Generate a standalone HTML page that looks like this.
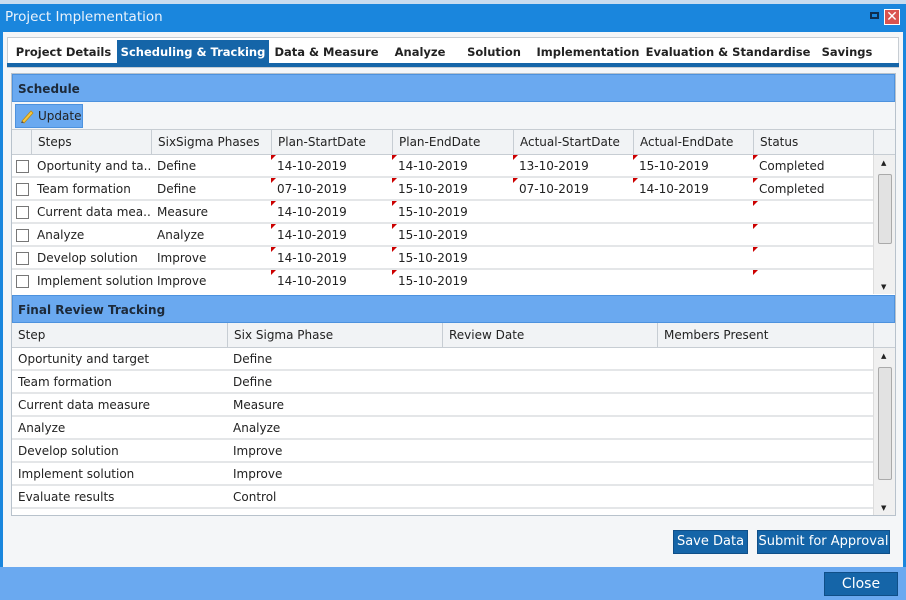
<!DOCTYPE html>
<html><head><style>
*{box-sizing:border-box;margin:0;padding:0}
body{width:906px;height:600px;overflow:hidden;background:#f4f6f8;font-family:"DejaVu Sans","Liberation Sans",sans-serif;font-size:12px;color:#222;position:relative}
.a{position:absolute}
.tab{position:absolute;top:40px;height:24px;line-height:25px;font-weight:bold;font-size:11.5px;color:#222;text-align:center}
.hdr{position:absolute;background:#6aa9f0;border:1px solid #4d92de;font-weight:bold;font-size:12px;color:#1d2a3a;padding-left:5px}
.gh{position:absolute;background:#f1f3f5;border-bottom:1px solid #c7cdd3;height:25px}
.gh div{position:absolute;top:0;height:25px;line-height:25px;padding-left:6px;border-left:1px solid #c7cdd3;font-size:12px}
.row{position:absolute;left:12px;height:23px;border-bottom:2px solid #e4e6e8;background:#fff}
.row div{position:absolute;top:0;line-height:23px;padding-left:6px;white-space:nowrap;overflow:hidden;font-size:12px}
.cb{position:absolute;left:4px;top:5px;width:13px;height:13px;border:1px solid #777;background:#fff}
.tri{position:absolute;top:0;width:0;height:0;border-top:5px solid #c00;border-right:5px solid transparent}
.btn{position:absolute;background:#1565a8;color:#fff;font-size:13px;text-align:center;border:1px solid #0f4f88}
.sb{position:absolute;background:#f0f0f0;border-left:1px solid #ddd}
.thumb{position:absolute;left:4px;width:14px;background:#e2e2e2;border:1px solid #aaa;border-radius:2px}
</style></head><body>
<div class="a" style="left:0;top:0;width:906px;height:4px;background:#c9dcef"></div>
<div class="a" style="left:0;top:4px;width:906px;height:28px;background:#1a86dd"></div>
<div class="a" style="left:5px;top:9px;color:#eaf2fb;font-size:13.5px">Project Implementation</div>
<div class="a" style="left:870px;top:12px;width:9px;height:7px;border:2px solid #0e2e50"></div>
<div class="a" style="left:884px;top:9px;width:16px;height:16px;background:#d9534f;border:1px solid #fff;color:#fff;font-weight:bold;font-size:14px;line-height:14px;text-align:center">✕</div>
<div class="a" style="left:0;top:32px;width:3px;height:535px;background:#1a86dd"></div>
<div class="a" style="left:903px;top:32px;width:3px;height:535px;background:#1a86dd"></div>

<div class="a" style="left:7px;top:37px;width:892px;height:31px;background:#fff;border:1px solid #c7cdd3"></div>
<div class="a" style="left:7px;top:63px;width:892px;height:4px;background:#1565a8"></div>
<div class="tab" style="left:10px;width:107px">Project Details</div>
<div class="tab" style="left:117px;width:152px;background:#1565a8;color:#fff;height:25px">Scheduling &amp; Tracking</div>
<div class="tab" style="left:269px;width:115px">Data &amp; Measure</div>
<div class="tab" style="left:384px;width:72px">Analyze</div>
<div class="tab" style="left:456px;width:76px">Solution</div>
<div class="tab" style="left:532px;width:112px">Implementation</div>
<div class="tab" style="left:644px;width:168px">Evaluation &amp; Standardise</div>
<div class="tab" style="left:812px;width:70px">Savings</div>

<div class="a" style="left:11px;top:73px;width:885px;height:443px;border:1px solid #b8c2cc;background:#fff"></div>
<div class="hdr" style="left:12px;top:74px;width:883px;height:28px;line-height:28px">Schedule</div>
<div class="a" style="left:12px;top:102px;width:883px;height:28px;background:#f4f6f8;border-bottom:1px solid #c7cdd3"></div>
<div class="a" style="left:15px;top:104px;width:68px;height:24px;background:#6aa9f0;border:1px solid #4d92de;line-height:22px;padding-left:22px;font-size:12px">Update</div>
<svg class="a" style="left:19px;top:108px" width="16" height="16"><path d="M3 13 L12 3 L14 5 L5 15 Z" fill="#f5c842" stroke="#c08a10" stroke-width="0.8"/><path d="M3 13 L2 15 L5 15Z" fill="#555"/></svg>

<div class="gh" style="left:12px;top:130px;width:883px">
<div style="left:19px">Steps</div><div style="left:139px">SixSigma Phases</div><div style="left:259px">Plan-StartDate</div><div style="left:380px">Plan-EndDate</div><div style="left:501px">Actual-StartDate</div><div style="left:621px">Actual-EndDate</div><div style="left:741px">Status</div><div style="left:861px"></div>
</div>

<div class="row" style="top:155px;width:861px"><span class="cb"></span><div style="left:19px;width:120px">Oportunity and ta...</div><div style="left:139px">Define</div><span class="tri" style="left:259px"></span><div style="left:259px">14-10-2019</div><span class="tri" style="left:380px"></span><div style="left:380px">14-10-2019</div><span class="tri" style="left:501px"></span><div style="left:501px">13-10-2019</div><span class="tri" style="left:621px"></span><div style="left:621px">15-10-2019</div><span class="tri" style="left:741px"></span><div style="left:741px">Completed</div></div>
<div class="row" style="top:178px;width:861px"><span class="cb"></span><div style="left:19px">Team formation</div><div style="left:139px">Define</div><span class="tri" style="left:259px"></span><div style="left:259px">07-10-2019</div><span class="tri" style="left:380px"></span><div style="left:380px">15-10-2019</div><span class="tri" style="left:501px"></span><div style="left:501px">07-10-2019</div><span class="tri" style="left:621px"></span><div style="left:621px">14-10-2019</div><span class="tri" style="left:741px"></span><div style="left:741px">Completed</div></div>
<div class="row" style="top:201px;width:861px"><span class="cb"></span><div style="left:19px;width:120px">Current data mea...</div><div style="left:139px">Measure</div><span class="tri" style="left:259px"></span><div style="left:259px">14-10-2019</div><span class="tri" style="left:380px"></span><div style="left:380px">15-10-2019</div><span class="tri" style="left:741px"></span></div>
<div class="row" style="top:224px;width:861px"><span class="cb"></span><div style="left:19px">Analyze</div><div style="left:139px">Analyze</div><span class="tri" style="left:259px"></span><div style="left:259px">14-10-2019</div><span class="tri" style="left:380px"></span><div style="left:380px">15-10-2019</div><span class="tri" style="left:741px"></span></div>
<div class="row" style="top:247px;width:861px"><span class="cb"></span><div style="left:19px">Develop solution</div><div style="left:139px">Improve</div><span class="tri" style="left:259px"></span><div style="left:259px">14-10-2019</div><span class="tri" style="left:380px"></span><div style="left:380px">15-10-2019</div><span class="tri" style="left:741px"></span></div>
<div class="row" style="top:270px;width:861px;height:24px;border:none"><span class="cb"></span><div style="left:19px">Implement solution</div><div style="left:139px">Improve</div><span class="tri" style="left:259px"></span><div style="left:259px">14-10-2019</div><span class="tri" style="left:380px"></span><div style="left:380px">15-10-2019</div><span class="tri" style="left:741px"></span></div>
<div class="sb" style="left:873px;top:155px;width:22px;height:139px"><div style="position:absolute;left:7px;top:4px;font-size:7px">▲</div><div class="thumb" style="top:19px;height:70px"></div><div style="position:absolute;left:7px;bottom:3px;font-size:7px">▼</div></div>

<div class="hdr" style="left:12px;top:295px;width:883px;height:28px;line-height:28px">Final Review Tracking</div>
<div class="gh" style="left:12px;top:323px;width:883px">
<div style="left:0;border:none">Step</div><div style="left:215px">Six Sigma Phase</div><div style="left:430px">Review Date</div><div style="left:645px">Members Present</div><div style="left:861px"></div>
</div>
<div class="row" style="top:348px;width:861px"><div style="left:0">Oportunity and target</div><div style="left:215px">Define</div></div>
<div class="row" style="top:371px;width:861px"><div style="left:0">Team formation</div><div style="left:215px">Define</div></div>
<div class="row" style="top:394px;width:861px"><div style="left:0">Current data measure</div><div style="left:215px">Measure</div></div>
<div class="row" style="top:417px;width:861px"><div style="left:0">Analyze</div><div style="left:215px">Analyze</div></div>
<div class="row" style="top:440px;width:861px"><div style="left:0">Develop solution</div><div style="left:215px">Improve</div></div>
<div class="row" style="top:463px;width:861px"><div style="left:0">Implement solution</div><div style="left:215px">Improve</div></div>
<div class="row" style="top:486px;width:861px"><div style="left:0">Evaluate results</div><div style="left:215px">Control</div></div>
<div class="sb" style="left:873px;top:348px;width:22px;height:167px"><div style="position:absolute;left:7px;top:4px;font-size:7px">▲</div><div class="thumb" style="top:19px;height:113px"></div><div style="position:absolute;left:7px;bottom:3px;font-size:7px">▼</div></div>

<div class="btn" style="left:673px;top:530px;width:75px;height:24px;line-height:22px">Save Data</div>
<div class="btn" style="left:757px;top:530px;width:133px;height:24px;line-height:22px">Submit for Approval</div>

<div class="a" style="left:0;top:567px;width:906px;height:33px;background:#6aa9f0"></div>
<div class="btn" style="left:824px;top:572px;width:74px;height:24px;line-height:23px;font-size:14px">Close</div>
</body></html>
